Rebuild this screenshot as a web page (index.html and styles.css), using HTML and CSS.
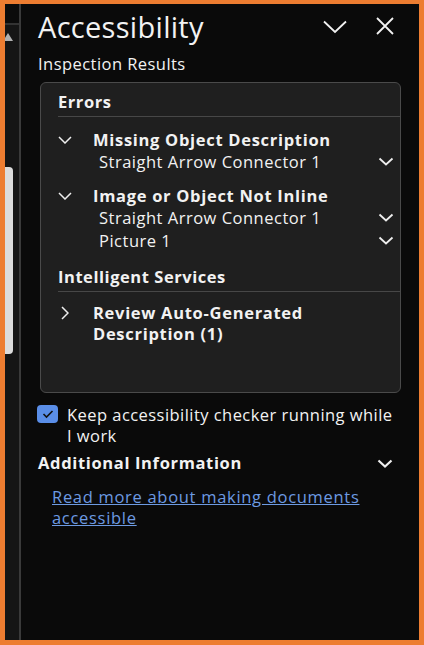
FILE: index.html
```html
<!DOCTYPE html>
<html lang="en">
<head>
  <meta charset="UTF-8" />
  <meta name="viewport" content="width=device-width, initial-scale=1.0" />
  <title>Accessibility</title>
  <link rel="stylesheet" href="styles.css">
</head>
<body>
  <div class="frame">
    <div class="rail">
      <div class="rail-top"></div>
      <div class="rail-arrow"></div>
      <div class="rail-thumb"></div>
    </div>
    <div class="divider"></div>

    <div class="pane">
      <div class="pane-head">
        <h1>Accessibility</h1>
        <svg class="head-icon" width="24" height="14" viewBox="0 0 24 14"><path d="M1 1.5 L12 12 L23 1.5" fill="none" stroke="#f2f2f2" stroke-width="1.8"/></svg>
        <svg class="head-icon close" width="18" height="18" viewBox="0 0 18 18"><path d="M1 1 L17 17 M17 1 L1 17" fill="none" stroke="#f2f2f2" stroke-width="1.8"/></svg>
      </div>
      <div class="subtitle">Inspection Results</div>

      <div class="card">
        <div class="section">Errors</div>

        <div class="issue">
          <svg class="twisty" width="14" height="8" viewBox="0 0 14 8"><path d="M1 1 L7 7 L13 1" fill="none" stroke="#eee" stroke-width="1.5"/></svg>
          <span>Missing Object Description</span>
        </div>
        <div class="item">
          <span>Straight Arrow Connector 1</span>
          <svg width="16" height="9" viewBox="0 0 16 9"><path d="M1.5 1.5 L8 7.5 L14.5 1.5" fill="none" stroke="#eee" stroke-width="1.8"/></svg>
        </div>

        <div class="issue">
          <svg class="twisty" width="14" height="8" viewBox="0 0 14 8"><path d="M1 1 L7 7 L13 1" fill="none" stroke="#eee" stroke-width="1.5"/></svg>
          <span>Image or Object Not Inline</span>
        </div>
        <div class="item">
          <span>Straight Arrow Connector 1</span>
          <svg width="16" height="9" viewBox="0 0 16 9"><path d="M1.5 1.5 L8 7.5 L14.5 1.5" fill="none" stroke="#eee" stroke-width="1.8"/></svg>
        </div>
        <div class="item">
          <span>Picture 1</span>
          <svg width="16" height="9" viewBox="0 0 16 9"><path d="M1.5 1.5 L8 7.5 L14.5 1.5" fill="none" stroke="#eee" stroke-width="1.8"/></svg>
        </div>

        <div class="section second">Intelligent Services</div>

        <div class="issue review">
          <svg class="twisty right" width="8" height="14" viewBox="0 0 8 14"><path d="M1 1 L7 7 L1 13" fill="none" stroke="#eee" stroke-width="1.5"/></svg>
          <span>Review Auto-Generated<br>Description (1)</span>
        </div>
      </div>

      <label class="check">
        <span class="box">
          <svg width="12" height="10" viewBox="0 0 12 10"><path d="M1.5 5 L4.5 8 L10.5 2" fill="none" stroke="#111" stroke-width="1.6"/></svg>
        </span>
        <span>Keep accessibility checker running while<br>I work</span>
      </label>

      <div class="extra">
        <span>Additional Information</span>
        <svg width="16" height="9" viewBox="0 0 16 9"><path d="M1.5 1.5 L8 7.5 L14.5 1.5" fill="none" stroke="#eee" stroke-width="2.2"/></svg>
      </div>

      <a class="link" href="#">Read more about making documents accessible</a>
    </div>
  </div>
</body>
</html>
```

FILE: styles.css
```css
body {
  margin: 0;
  font-family: 'Open Sans', 'Noto Sans', sans-serif;
  color: #f2f2f2;
  background: #ed7d31;
}
.frame {
  display: flex;
  width: 424px;
  height: 645px;
  box-sizing: border-box;
  border: 5px solid #ed7d31;
  border-top-width: 4px;
  background: #0a0a0a;
}
.rail {
  width: 14px;
  overflow: hidden;
  background: #151515;
}
.rail-top {
  height: 19px;
  background: #0b0b0b;
  border-bottom: 2px solid #333;
}
.rail-arrow {
  margin: 8px 0 0 -2px;
  width: 0;
  height: 0;
  border-left: 5px solid transparent;
  border-right: 5px solid transparent;
  border-bottom: 8px solid #b0b0b0;
}
.rail-thumb {
  margin-top: 126px;
  width: 8px;
  height: 187px;
  background: #dcdcdc;
  border-radius: 0 4px 4px 0;
}
.divider {
  width: 2px;
  background: #3a3a3a;
}
.pane {
  flex: 1;
  padding: 0 18px 0 17px;
}
.pane-head {
  display: flex;
  align-items: center;
  height: 44px;
}
h1 {
  flex: 1;
  margin: 0;
  font-size: 29px;
  font-weight: 400;
  letter-spacing: 0.3px;
}
.head-icon {
  margin: 2px 29px 0 0;
}
.head-icon.close {
  margin: 0 7px 0 0;
}
.subtitle {
  margin-top: 5px;
  font-size: 16.5px;
  line-height: 22px;
  letter-spacing: 0.45px;
}
.card {
  margin: 7px 0 0 2px;
  height: 311px;
  box-sizing: border-box;
  background: #1f1f1f;
  border: 1px solid #4a4a4a;
  border-radius: 6px;
  padding: 6px 0 0 17px;
}
.section {
  font-size: 16.5px;
  font-weight: 700;
  line-height: 26px;
  letter-spacing: 0.55px;
  border-bottom: 1px solid #474747;
  padding-bottom: 1px;
}
.section.second {
  margin-top: 12px;
}
.issue {
  display: flex;
  align-items: flex-start;
  margin-top: 12px;
  font-size: 16.5px;
  font-weight: 700;
  line-height: 21px;
  letter-spacing: 0.7px;
}
.issue.review {
  margin-top: 10px;
}
.twisty {
  flex: none;
  margin: 7px 21px 0 0;
}
.twisty.right {
  margin: 4px 24px 0 3px;
}
.item {
  display: flex;
  align-items: center;
  justify-content: space-between;
  padding: 0 6px 0 41px;
  font-size: 16.5px;
  line-height: 23px;
  letter-spacing: 0.5px;
}
.check {
  display: flex;
  align-items: flex-start;
  margin-top: 11px;
  font-size: 16.5px;
  line-height: 21px;
  letter-spacing: 0.45px;
}
.box {
  flex: none;
  display: flex;
  align-items: center;
  justify-content: center;
  width: 21px;
  height: 18px;
  margin: 1px 9px 0 -1px;
  background: #5a8ee8;
  border-radius: 4px;
}
.extra {
  display: flex;
  align-items: center;
  justify-content: space-between;
  margin-top: 6px;
  padding-right: 8px;
  font-size: 16.5px;
  font-weight: 700;
  line-height: 22px;
  letter-spacing: 0.65px;
}
.link {
  display: block;
  margin: 12px 0 0 14px;
  font-size: 16.5px;
  line-height: 21px;
  letter-spacing: 0.7px;
  color: #6d9ae2;
}
```
